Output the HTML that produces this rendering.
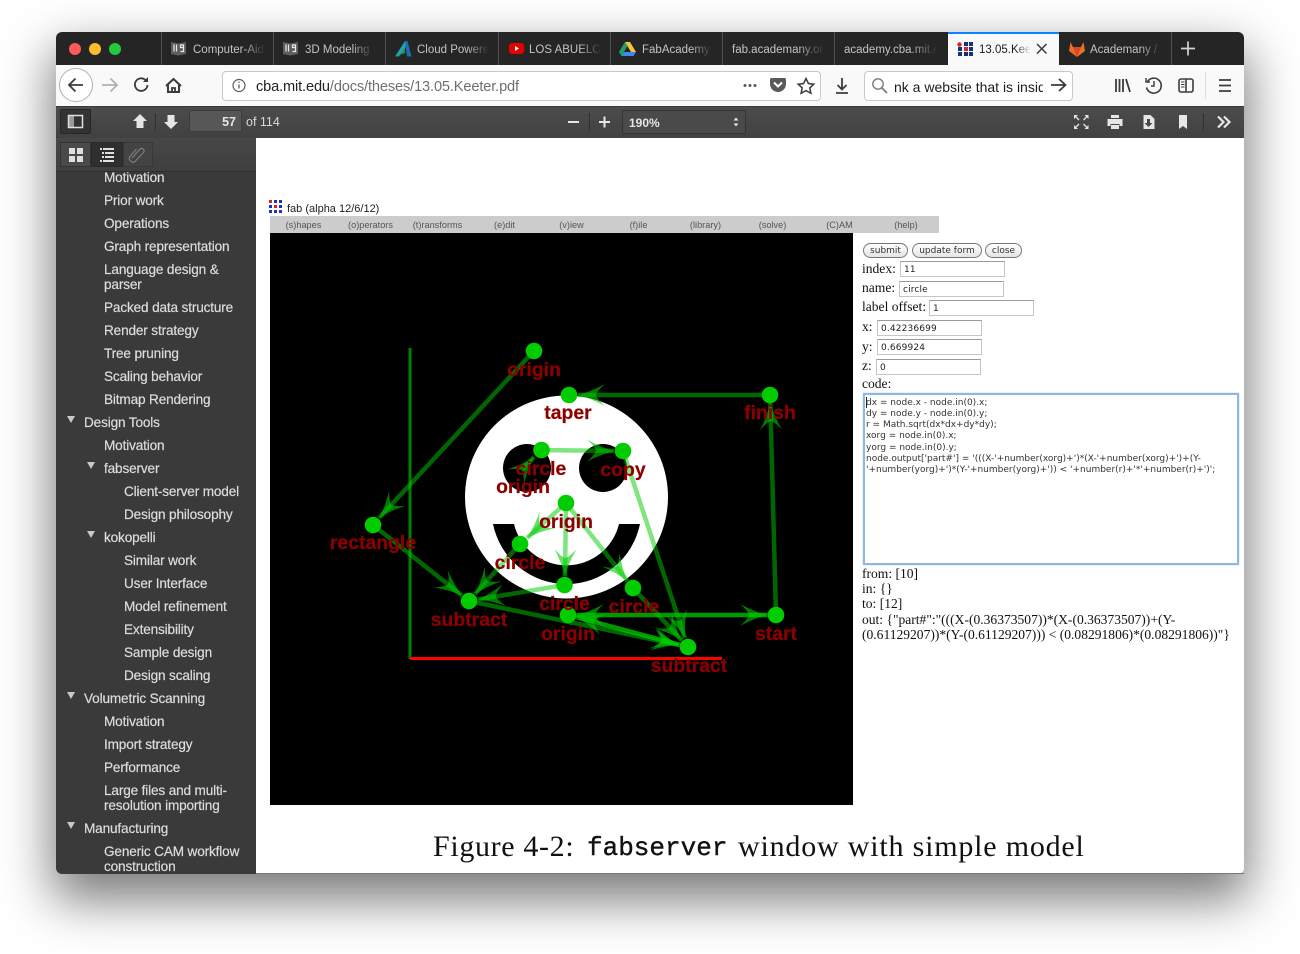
<!DOCTYPE html>
<html><head><meta charset="utf-8"><title>13.05.Keeter.pdf</title>
<style>
html,body{margin:0;padding:0;width:1300px;height:954px;background:#fff;overflow:hidden;font-family:"Liberation Sans",sans-serif}
.a{position:absolute;white-space:nowrap}
#win{position:absolute;left:56px;top:32px;width:1188px;height:842px;border-radius:6px;box-shadow:0 22px 50px 4px rgba(0,0,0,.52);background:#fff}
.t{position:absolute;top:42px;height:16px;line-height:16px;font-size:11.5px;color:#c4c4c6;white-space:nowrap;overflow:hidden;-webkit-mask-image:linear-gradient(90deg,#000 70%,transparent 100%);mask-image:linear-gradient(90deg,#000 70%,transparent 100%)}
.sep{position:absolute;top:32px;height:33px;width:1px;background:#4e4e4e}
.s{position:absolute;white-space:nowrap;font-size:13.6px;line-height:16px;height:16px;color:#dcdcdc;letter-spacing:-.15px;margin-top:1px;-webkit-text-stroke:.2px #dcdcdc}
.tri{position:absolute;width:0;height:0;border-left:4.5px solid transparent;border-right:4.5px solid transparent;border-top:7px solid #c8c8c8}
.m{position:absolute;top:216px;height:17px;line-height:18px;width:67px;text-align:center;font-size:9.2px;color:#555;background:#ccc}
.ser{position:absolute;white-space:nowrap;font-family:"Liberation Serif",serif;font-size:13.55px;line-height:15px;color:#111}
.in{position:absolute;box-sizing:border-box;width:105px;height:16px;background:#fff;border:1px solid #c6c6c6;border-top-color:#9a9a9a;font-family:"DejaVu Sans",sans-serif;font-size:9px;line-height:17px;padding-left:3px;color:#222;letter-spacing:.15px}
.b{position:absolute;top:243px;height:15px;box-sizing:border-box;border:1px solid #777;border-radius:8px;background:linear-gradient(#fff,#e4e4e4);font-family:"DejaVu Sans",sans-serif;font-size:9px;line-height:15px;text-align:center;color:#333}
.c{position:absolute;left:866px;white-space:nowrap;font-family:"DejaVu Sans",sans-serif;font-size:9px;line-height:11px;color:#333;letter-spacing:0}
svg{position:absolute;left:0;top:0}
</style></head><body>
<div id="win"></div>
<!-- chrome -->
<div class="a" style="left:56px;top:32px;width:1188px;height:33px;background:#252525;border-radius:6px 6px 0 0"></div>
<div class="a" style="left:948px;top:32px;width:111px;height:33px;background:#f9f9fa"></div>
<div class="a" style="left:948px;top:32px;width:111px;height:2px;background:#0a84ff"></div>
<div class="sep" style="left:161px"></div><div class="sep" style="left:273px"></div><div class="sep" style="left:385px"></div><div class="sep" style="left:498px"></div><div class="sep" style="left:610px"></div><div class="sep" style="left:722px"></div><div class="sep" style="left:834px"></div><div class="sep" style="left:1171px"></div>
<div class="t" style="left:193px;width:72px">Computer-Aided Design</div>
<div class="t" style="left:305px;width:68px">3D Modeling Tools</div>
<div class="t" style="left:417px;width:72px">Cloud Powered Design</div>
<div class="t" style="left:529px;width:72px">LOS ABUELOS DE</div>
<div class="t" style="left:642px;width:70px">FabAcademy Drive</div>
<div class="t" style="left:732px;width:93px">fab.academany.org</div>
<div class="t" style="left:844px;width:94px">academy.cba.mit.edu</div>
<div class="t" style="left:979px;width:52px;color:#1c1c1e">13.05.Keeter.pdf</div>
<div class="t" style="left:1090px;width:72px">Academany / Fab</div>
<!-- nav -->
<div class="a" style="left:56px;top:65px;width:1188px;height:41px;background:#f9f9fa"></div>
<div class="a" style="left:59px;top:68px;width:32px;height:32px;border:1px solid #b1b1b3;border-radius:50%;background:#fff"></div>
<div class="a" style="left:222px;top:71px;width:597px;height:28px;background:#fff;border:1px solid #c8c8ca;border-radius:4px"></div>
<div class="a" style="left:256px;top:78px;font-size:14.6px;line-height:18px;color:#6f6f72;letter-spacing:-.14px"><span style="color:#222">cba.mit.edu</span>/docs/theses/13.05.Keeter.pdf</div>
<div class="a" style="left:864px;top:71px;width:207px;height:28px;background:#fff;border:1px solid #c8c8ca;border-radius:4px"></div>
<div class="a" style="left:894px;top:78px;width:149px;overflow:hidden;font-size:14px;line-height:18px;color:#1c1c1e">nk a website that is inside</div>
<!-- pdf toolbar -->
<div class="a" style="left:56px;top:106px;width:1188px;height:32px;background:linear-gradient(#4c4c4c,#414141);box-shadow:inset 0 1px 0 #3a3a3a"></div>
<div class="a" style="left:60px;top:109px;width:31px;height:25px;box-sizing:border-box;background:#333;border:1px solid #262626;border-radius:2px"></div>
<div class="a" style="left:189px;top:110px;width:53px;height:22px;box-sizing:border-box;background:#575757;border:1px solid #3c3c3c;border-radius:2px;text-align:right;padding-right:5px;font-size:12.5px;font-weight:bold;line-height:23px;color:#e6e6e6">57</div>
<div class="a" style="left:246px;top:115px;font-size:12.5px;line-height:15px;color:#d8d8d8">of 114</div>
<div class="a" style="left:622px;top:110px;width:124px;height:24px;box-sizing:border-box;background:#4a4a4a;border:1px solid #333;border-radius:2px;font-size:12px;font-weight:bold;line-height:24px;color:#e6e6e6;padding-left:6px">190%</div>
<!-- sidebar -->
<div class="a" style="left:56px;top:138px;width:200px;height:736px;background:#3a3a3a;border-radius:0 0 0 6px;overflow:hidden">
<div class="s" style="left:48px;top:31px">Motivation</div>
<div class="s" style="left:48px;top:54px">Prior work</div>
<div class="s" style="left:48px;top:77px">Operations</div>
<div class="s" style="left:48px;top:100px">Graph representation</div>
<div class="s" style="left:48px;top:123px">Language design &amp;</div>
<div class="s" style="left:48px;top:138px">parser</div>
<div class="s" style="left:48px;top:161px">Packed data structure</div>
<div class="s" style="left:48px;top:184px">Render strategy</div>
<div class="s" style="left:48px;top:207px">Tree pruning</div>
<div class="s" style="left:48px;top:230px">Scaling behavior</div>
<div class="s" style="left:48px;top:253px">Bitmap Rendering</div>
<div class="tri" style="left:11px;top:278px"></div>
<div class="s" style="left:28px;top:276px">Design Tools</div>
<div class="s" style="left:48px;top:299px">Motivation</div>
<div class="tri" style="left:31px;top:324px"></div>
<div class="s" style="left:48px;top:322px">fabserver</div>
<div class="s" style="left:68px;top:345px">Client-server model</div>
<div class="s" style="left:68px;top:368px">Design philosophy</div>
<div class="tri" style="left:31px;top:393px"></div>
<div class="s" style="left:48px;top:391px">kokopelli</div>
<div class="s" style="left:68px;top:414px">Similar work</div>
<div class="s" style="left:68px;top:437px">User Interface</div>
<div class="s" style="left:68px;top:460px">Model refinement</div>
<div class="s" style="left:68px;top:483px">Extensibility</div>
<div class="s" style="left:68px;top:506px">Sample design</div>
<div class="s" style="left:68px;top:529px">Design scaling</div>
<div class="tri" style="left:11px;top:554px"></div>
<div class="s" style="left:28px;top:552px">Volumetric Scanning</div>
<div class="s" style="left:48px;top:575px">Motivation</div>
<div class="s" style="left:48px;top:598px">Import strategy</div>
<div class="s" style="left:48px;top:621px">Performance</div>
<div class="s" style="left:48px;top:644px">Large files and multi-</div>
<div class="s" style="left:48px;top:659px">resolution importing</div>
<div class="tri" style="left:11px;top:684px"></div>
<div class="s" style="left:28px;top:682px">Manufacturing</div>
<div class="s" style="left:48px;top:705px">Generic CAM workflow</div>
<div class="s" style="left:48px;top:720px">construction</div>
<div class="a" style="left:0;top:0;width:200px;height:33px;background:linear-gradient(#474747,#3f3f3f);border-bottom:1px solid #2e2e2e">
<div class="a" style="left:4px;top:4px;width:31px;height:25px;box-sizing:border-box;background:#4a4a4a;border:1px solid #333"></div>
<div class="a" style="left:35px;top:4px;width:32px;height:25px;box-sizing:border-box;background:#2f2f2f;border:1px solid #2a2a2a"></div>
<div class="a" style="left:67px;top:4px;width:30px;height:25px;box-sizing:border-box;background:#434343;border:1px solid #383838"></div>
</div>
</div>
<div class="a" style="left:256px;top:873px;width:988px;height:1px;background:#777"></div>
<!-- embedded figure -->
<div class="a" style="left:287px;top:202px;font-size:11px;line-height:14px;color:#222">fab (alpha 12/6/12)</div>
<div class="m" style="left:270px">(s)hapes</div><div class="m" style="left:337px">(o)perators</div><div class="m" style="left:404px">(t)ransforms</div><div class="m" style="left:471px">(e)dit</div><div class="m" style="left:538px">(v)iew</div><div class="m" style="left:605px">(f)ile</div><div class="m" style="left:672px">(library)</div><div class="m" style="left:739px">(solve)</div><div class="m" style="left:806px">(C)AM</div><div class="m" style="left:873px;width:66px">(help)</div>
<div class="a" style="left:270px;top:233px;width:583px;height:572px;background:#000"></div>
<!-- form -->
<div class="b" style="left:863px;width:45px">submit</div><div class="b" style="left:912px;width:70px">update form</div><div class="b" style="left:985px;width:37px">close</div>
<div class="ser" style="left:862px;top:261px">index:</div><div class="in" style="left:900px;top:261px">11</div>
<div class="ser" style="left:862px;top:280px">name:</div><div class="in" style="left:899px;top:281px">circle</div>
<div class="ser" style="left:862px;top:299px">label offset:</div><div class="in" style="left:929px;top:300px">1</div>
<div class="ser" style="left:862px;top:319px">x:</div><div class="in" style="left:877px;top:320px">0.42236699</div>
<div class="ser" style="left:862px;top:339px">y:</div><div class="in" style="left:877px;top:339px">0.669924</div>
<div class="ser" style="left:862px;top:358px">z:</div><div class="in" style="left:876px;top:359px">0</div>
<div class="ser" style="left:862px;top:376px">code:</div>
<div class="a" style="left:863px;top:393px;width:376px;height:172px;box-sizing:border-box;background:#fff;border:2px solid #8db8e2;box-shadow:0 0 1px #8db8e2"></div>
<div class="a" style="left:866px;top:397px;width:1px;height:11px;background:#222"></div>
<div class="c" style="top:398px">dx = node.x - node.in(0).x;</div>
<div class="c" style="top:409px">dy = node.y - node.in(0).y;</div>
<div class="c" style="top:420px">r = Math.sqrt(dx*dx+dy*dy);</div>
<div class="c" style="top:431px">xorg = node.in(0).x;</div>
<div class="c" style="top:443px">yorg = node.in(0).y;</div>
<div class="c" style="top:454px">node.output['part#'] = '(((X-'+number(xorg)+')*(X-'+number(xorg)+')+(Y-</div>
<div class="c" style="top:465px">'+number(yorg)+')*(Y-'+number(yorg)+')) &lt; '+number(r)+'*'+number(r)+')';</div>
<div class="ser" style="left:862px;top:566px">from: [10]</div>
<div class="ser" style="left:862px;top:581px">in: {}</div>
<div class="ser" style="left:862px;top:596px">to: [12]</div>
<div class="ser" style="left:862px;top:612px">out: {"part#":"(((X-(0.36373507))*(X-(0.36373507))+(Y-</div>
<div class="ser" style="left:862px;top:627px">(0.61129207))*(Y-(0.61129207))) &lt; (0.08291806)*(0.08291806))"}</div>
<!-- caption -->
<div class="a" style="left:433px;top:829px;font-family:'Liberation Serif',serif;font-size:30px;line-height:36px;color:#111;letter-spacing:.65px">Figure 4-2:</div>
<div class="a" style="left:587px;top:830px;font-family:'Liberation Mono',monospace;font-size:26px;line-height:36px;color:#111;letter-spacing:0;-webkit-text-stroke:.4px #111">fabserver</div>
<div class="a" style="left:738px;top:829px;font-family:'Liberation Serif',serif;font-size:30px;line-height:36px;color:#111;letter-spacing:.8px">window with simple model</div>

<svg width="1300" height="954" viewBox="0 0 1300 954" xmlns="http://www.w3.org/2000/svg">
<defs>
<marker id="h" markerUnits="userSpaceOnUse" viewBox="-30 -15 32 30" markerWidth="32" markerHeight="30" refX="0" refY="0" orient="auto" overflow="visible"><path d="M0 0Q-12-3-27-11Q-19-4-18 0Q-19 4-27 11Q-12 3 0 0Z" fill="#0c0" fill-opacity=".6"/></marker>
</defs>
<g style="filter:blur(.35px)">
<!-- smiley -->
<circle cx="566.5" cy="497" r="101.5" fill="#fff"/>
<circle cx="527" cy="468" r="24"/><circle cx="603" cy="468" r="24"/>
<path d="M493 524A75 75 0 0 0 640 524L619 524A54 54 0 0 1 514 524Z" fill="#000"/>
<path d="M410 348V659" stroke="#008000" stroke-width="3" fill="none"/>
<path d="M410 658.5H722" stroke="#f00" stroke-width="3" fill="none"/>
<g stroke="#00cc00" stroke-opacity=".5" stroke-width="4.500" fill="none" marker-end="url(#h)">
<path d="M534 351L379 518"/>
<path d="M770 395H578"/>
<path d="M776 615L770.3 403"/>
<path d="M541 450L614 451"/>
<path d="M623 451L685 638"/>
<path d="M566 503L527 538"/>
<path d="M566 503L565 576"/>
<path d="M566 503L627.5 581"/>
<path d="M373 525L462 595.5"/>
<path d="M520 544L475 594"/>
<path d="M564.5 585L478 599.5"/>
<path d="M469 601L679 645"/>
<path d="M633 588L682 640.5"/>
<path d="M568 615H767"/>
<path d="M776 615H577"/>
<path d="M568 615L679 644.7"/>
<path d="M688 647L577 617.3"/>
<path d="M523 469L534 457"/>
</g>
<g fill="#00cc00">
<circle cx="534" cy="351" r="8.300"/><circle cx="569" cy="395" r="8.300"/><circle cx="770" cy="395" r="8.300"/><circle cx="541.5" cy="450" r="8.300"/><circle cx="623" cy="451" r="8.300"/><circle cx="566" cy="503" r="8.300"/><circle cx="373" cy="525" r="8.300"/><circle cx="520" cy="544" r="8.300"/><circle cx="564.5" cy="585" r="8.300"/><circle cx="633" cy="588" r="8.300"/><circle cx="469" cy="601" r="8.300"/><circle cx="568" cy="615" r="8.300"/><circle cx="776" cy="615" r="8.300"/><circle cx="688" cy="647" r="8.300"/>
</g>
<g font-family="'Liberation Sans',sans-serif" font-weight="bold" font-size="19.400" fill="#8e0000" stroke="#8e0000" stroke-width=".2" text-anchor="middle">
<text x="534" y="376">origin</text><text x="568" y="419">taper</text><text x="770" y="419">finish</text><text x="541" y="475">circle</text><text x="623" y="476">copy</text><text x="523" y="493">origin</text><text x="566" y="528">origin</text><text x="373" y="549">rectangle</text><text x="520" y="569">circle</text><text x="564.5" y="610">circle</text><text x="634" y="613">circle</text><text x="469" y="626">subtract</text><text x="568" y="640">origin</text><text x="776" y="640">start</text><text x="689" y="672">subtract</text>
</g>
</g>
<!-- fab icon -->
<g fill="#1a2fd0"><rect x="269" y="200" width="3" height="3" fill="#e02020"/><rect x="274" y="200" width="3" height="3"/><rect x="279" y="200" width="3" height="3"/><rect x="269" y="205" width="3" height="3"/><rect x="274" y="205" width="3" height="3" fill="#e02020"/><rect x="279" y="205" width="3" height="3"/><rect x="269" y="210" width="3" height="3"/><rect x="274" y="210" width="3" height="3"/><rect x="279" y="210" width="3" height="3"/></g>
<!-- traffic -->
<circle cx="75" cy="49" r="6" fill="#fc5b57"/><circle cx="95" cy="49" r="6" fill="#fdbc2e"/><circle cx="115" cy="49" r="6" fill="#26c83f"/>
<!-- book icons -->
<g><path d="M171 42l7 1.500 8-1.500v12l-8 1.500-7-1.500z" fill="#5e5e5e"/><path d="M174 44.500v7M176.500 44.500v7M180.500 45h3v2.500h-3zM183.500 47.500v4h-3" stroke="#e8e8e8" stroke-width="1.200" fill="none"/></g>
<g><path d="M283 42l7 1.500 8-1.500v12l-8 1.500-7-1.500z" fill="#5e5e5e"/><path d="M286 44.500v7M288.500 44.500v7M292.500 45h3v2.500h-3zM295.500 47.500v4h-3" stroke="#e8e8e8" stroke-width="1.200" fill="none"/></g>
<!-- autodesk -->
<path d="M395 56.500L405 41h2.500l-3 9-5.500 6z" fill="#1fa6a0"/><path d="M395 56.500l4 0 5.500-6.500 1 3z" fill="#2c8f5c"/><path d="M405 41h2.500l4 15.500h-4.500z" fill="#1c6fb5"/>
<!-- youtube -->
<rect x="509" y="43" width="15" height="11" rx="3" fill="#e60000"/><path d="M515 46l4 2.500-4 2.500z" fill="#fff"/>
<!-- drive -->
<path d="M625 42h5l6 10h-5z" fill="#f6c33a"/><path d="M625 42l-6 10 2.500 4 6-10z" fill="#1da462"/><path d="M621.500 56h12l2.500-4h-12z" fill="#4286f5"/>
<!-- active tab grid -->
<g fill="#14317c"><circle cx="959.500" cy="44.500" r="2.200" fill="#d8222a"/><rect x="964" y="42" width="4" height="4"/><rect x="969" y="42" width="4" height="4"/><rect x="958" y="47" width="4" height="4"/><rect x="964" y="47" width="4" height="4" fill="#d8222a"/><rect x="969" y="47" width="4" height="4"/><rect x="958" y="52" width="4" height="4"/><rect x="964" y="52" width="4" height="4"/><rect x="969" y="52" width="4" height="4"/></g>
<path d="M1037 44l9.500 9.500M1046.500 44l-9.500 9.500" stroke="#3a3a3c" stroke-width="1.500" fill="none"/>
<!-- gitlab -->
<path d="M1077 57l-8-6 1.500-9 2.500 5h8l2.500-5 1.500 9z" fill="#e2712a"/><path d="M1077 57l-4-10h8z" fill="#e24329"/>
<path d="M1188 41.500v14M1181 48.500h14" stroke="#d4d4d6" stroke-width="1.700" fill="none"/>
<!-- nav icons -->
<g stroke="#3c3c3e" stroke-width="1.800" fill="none">
<path d="M83 85H69M75.500 78.500L69 85l6.500 6.500"/>
<path d="M117 85H102M110.500 78.500L117 85l-6.500 6.500" stroke="#b1b1b3"/>
<path d="M147.500 85a6.300 6.300 0 1 1-2-5" /><path d="M148 77v5h-5" fill="#3c3c3e" stroke="none"/>
<path d="M166 86l7.500-7 7.500 7M168 85v7h11v-7" stroke-width="2.100"/><path d="M172 92v-4h3v4" />
<circle cx="239" cy="85.500" r="6" stroke-width="1.200" stroke="#5a5a5c"/><path d="M239 84.500v4M239 81.800v1.200" stroke="#5a5a5c" stroke-width="1.300"/>
<path d="M771.500 78h13a1.500 1.500 0 0 1 1.500 1.500v4.500a8 8 0 0 1-16 0v-4.500A1.500 1.500 0 0 1 771.500 78z" fill="#5a5a5c" stroke="none"/><path d="M774 82.500l4 4 4-4" stroke="#fff" stroke-width="2"/>
<path d="M806 78.500l2.400 5 5.400.7-4 3.700 1.100 5.400-4.900-2.700-4.900 2.700 1.100-5.400-4-3.700 5.400-.7z" stroke-width="1.500"/>
<path d="M842 78v11M837.500 85l4.500 4.500 4.500-4.500M836 93h12"/>
<circle cx="878" cy="84" r="5.200" stroke="#7b7b7d" stroke-width="1.400"/><path d="M882 88l5 5" stroke="#7b7b7d" stroke-width="1.800"/>
<path d="M1051 85h14M1059 79l6.500 6-6.500 6"/>
<path d="M1116 79v13M1119.500 79v13M1123 79v13M1126 79l4 13"/>
<path d="M1147.500 81.500a7.500 7.500 0 1 1-1 6" stroke-width="1.600"/><path d="M1154 81v5h-3" stroke-width="1.400"/><path d="M1146 78v4h4" stroke-width="1.400"/>
<rect x="1179" y="79" width="14" height="13" rx="2" stroke-width="1.600"/><path d="M1186 79v13" stroke-width="1.600"/><path d="M1181 82h3.500M1181 84.500h3.500M1181 87h3.500" stroke-width="1"/>
<path d="M1219 80h12M1219 85.500h12M1219 91h12"/>
</g>
<circle cx="745" cy="85.500" r="1.500" fill="#5a5a5c"/><circle cx="750" cy="85.500" r="1.500" fill="#5a5a5c"/><circle cx="755" cy="85.500" r="1.500" fill="#5a5a5c"/>
<path d="M1205.500 72v27" stroke="#dcdcde"/>
<!-- pdf toolbar icons -->
<g fill="#e6e6e6">
<rect x="68.500" y="115.500" width="14" height="12" fill="none" stroke="#e0e0e0" stroke-width="1.500"/><rect x="69" y="116" width="5" height="11" fill="#e0e0e0" opacity=".6"/>
<path d="M140 114l7 7h-3.500v7h-7v-7H133z"/><path d="M171 129l7-7h-3.500v-7h-7v7H164z"/>
<rect x="155" y="113" width="1" height="18" fill="#2f2f2f"/>
<rect x="568" y="121" width="11" height="2"/><rect x="589" y="113" width="1" height="18" fill="#2f2f2f"/><rect x="599" y="121" width="11" height="2"/><rect x="603.500" y="116.500" width="2" height="11"/>
<path d="M736 117.500l2.500 3h-5zM736 126.500l2.500-3h-5z"/>
<path d="M1074 115h4l-4 4zM1088.500 115h-4l4 4zM1074 129h4l-4-4zM1088.500 129h-4l4-4z"/>
<path d="M1076 117l3 3M1086.500 117l-3 3M1076 127l3-3M1086.500 127l-3-3" stroke="#e6e6e6" stroke-width="1.300" fill="none"/>
<path d="M1111 115h8v3h-8zM1107.500 119h15v7h-3v-2h-9v2h-3zM1111 125h8v4h-8z"/>
<path d="M1143.500 115h7l4 4v10h-11z"/><path d="M1147 119h3v4h2.500l-4 4-4-4h2.500z" fill="#474747"/>
<path d="M1179 115h8v14l-4-3-4 3z"/>
<rect x="1203" y="113" width="1" height="18" fill="#2f2f2f"/>
</g>
<path d="M1218 116.500l5.500 5.500-5.500 5.500M1224 116.500l5.500 5.500-5.500 5.500" stroke="#e6e6e6" stroke-width="2.200" fill="none"/>
<!-- sidebar toolbar icons -->
<g fill="#e0e0e0"><rect x="69" y="148" width="6" height="6"/><rect x="77" y="148" width="6" height="6"/><rect x="69" y="156" width="6" height="6"/><rect x="77" y="156" width="6" height="6"/>
<rect x="100" y="148" width="2" height="2"/><rect x="103" y="148" width="11" height="2"/><rect x="102" y="152" width="2" height="2"/><rect x="105" y="152" width="9" height="2"/><rect x="102" y="156" width="2" height="2"/><rect x="105" y="156" width="9" height="2"/><rect x="100" y="160" width="2" height="2"/><rect x="103" y="160" width="11" height="2"/></g>
<path d="M132 158l8-9a2.500 2.500 0 0 1 3.500 3.500l-9 9.500a4 4 0 0 1-5-5l7-8" stroke="#7d7d7d" stroke-width="1.200" fill="none"/>
</svg>
</body></html>
